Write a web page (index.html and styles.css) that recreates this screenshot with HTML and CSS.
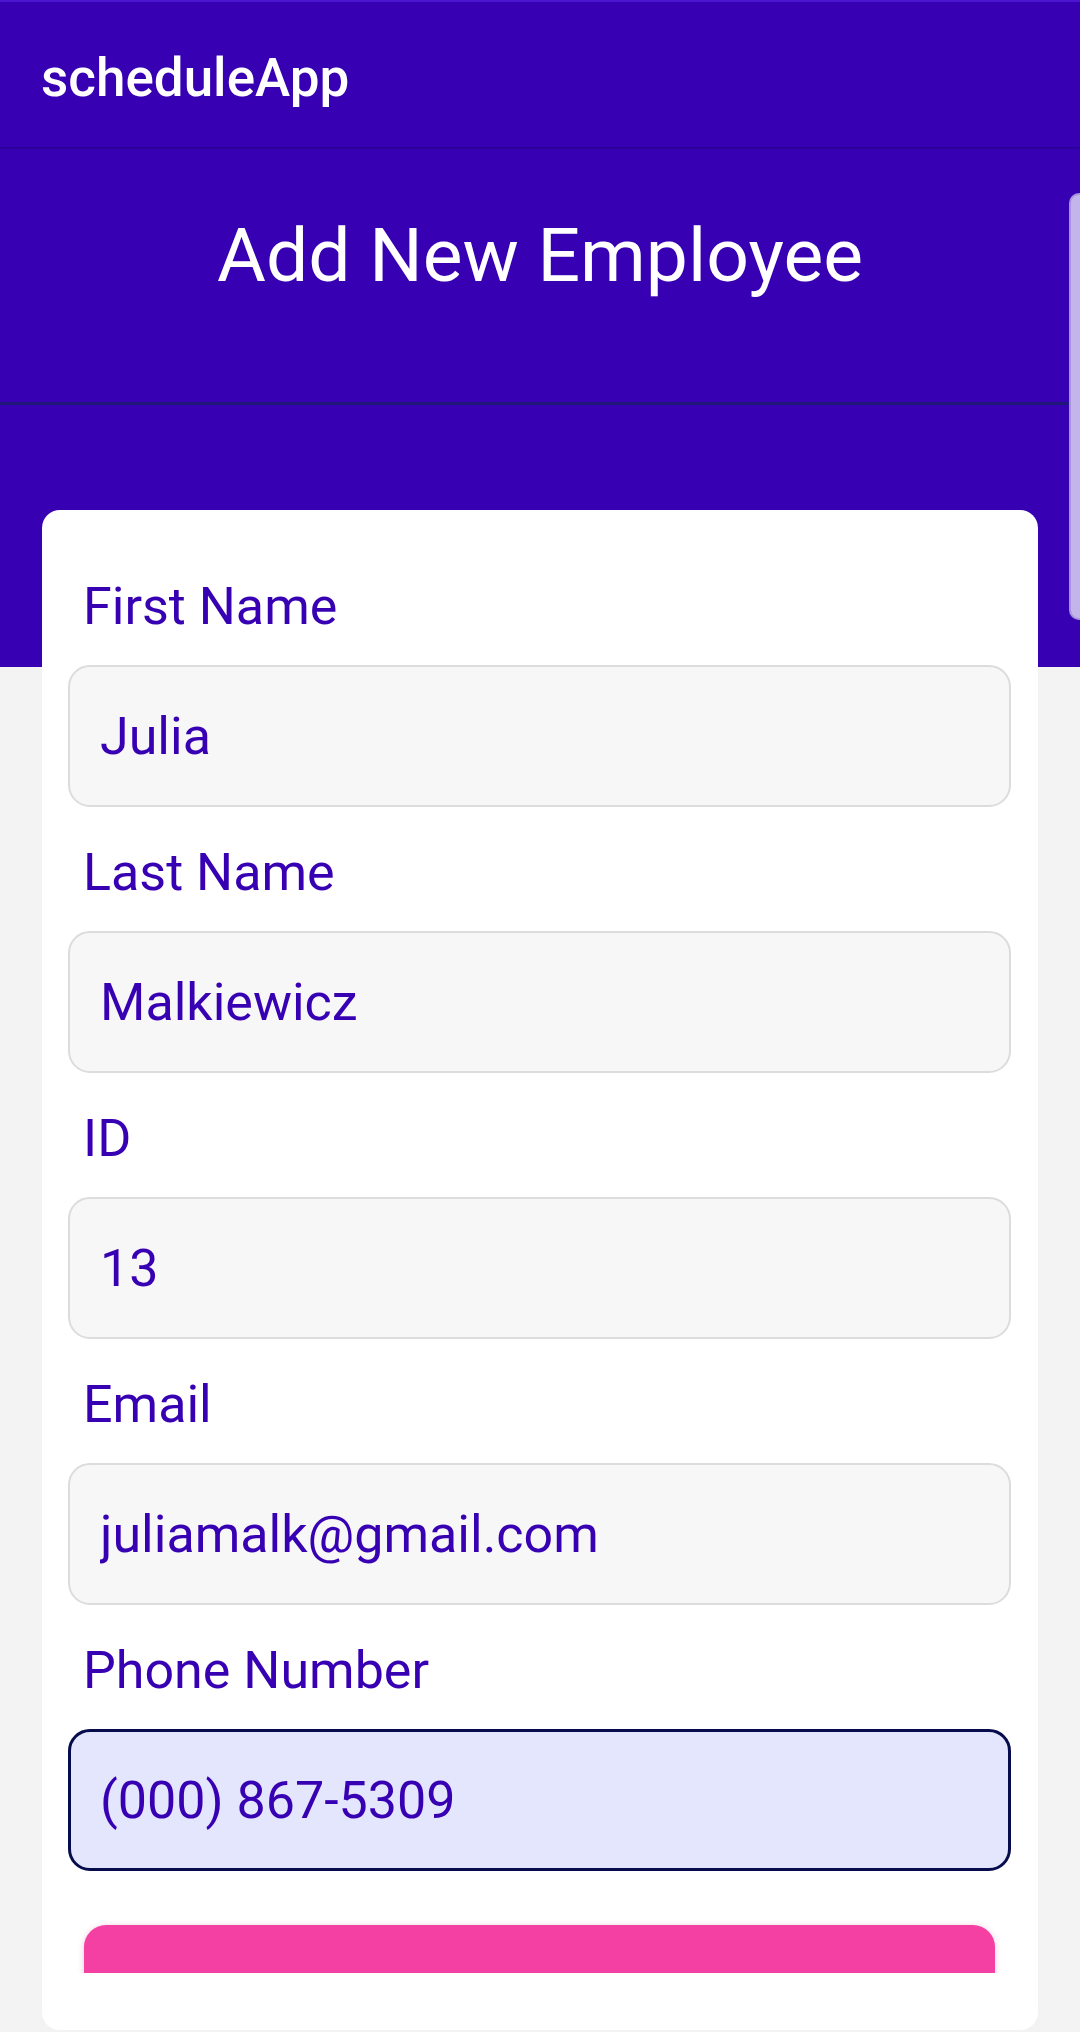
FILE: index.html
```html
<!DOCTYPE html>
<html lang="en">
<head>
<meta charset="utf-8">
<title>scheduleApp</title>
<link rel="stylesheet" href="styles.css">
</head>
<body>
<header class="appbar"><span class="brand">scheduleApp</span></header>
<section class="hero"><h1 class="hero-title">Add New Employee</h1></section>
<main class="main">
  <div class="card">
    <form class="form-scroll">
      <label class="field-label" for="fn">First Name</label>
      <input class="field-input" id="fn" type="text" value="Julia">
      <label class="field-label" for="ln">Last Name</label>
      <input class="field-input" id="ln" type="text" value="Malkiewicz">
      <label class="field-label" for="eid">ID</label>
      <input class="field-input" id="eid" type="text" value="13">
      <label class="field-label" for="em">Email</label>
      <input class="field-input" id="em" type="text" value="juliamalk@gmail.com">
      <label class="field-label" for="ph">Phone Number</label>
      <input class="field-input field-input--focused" id="ph" type="text" value="(000) 867-5309">
      <div class="submit-btn"></div>
    </form>
  </div>
</main>
<div class="edge-handle"></div>
</body>
</html>
```

FILE: styles.css
```css
html, body {
  margin: 0;
  padding: 0;
}
body {
  width: 1080px;
  height: 2032px;
  overflow: hidden;
  font-family: Roboto, "Noto Sans", sans-serif;
  background: #f3f3f3;
  position: relative;
}
.appbar {
  box-sizing: border-box;
  height: 147px;
  background: #3700b3;
  border-top: 2px solid #4a16d2;
  display: flex;
  align-items: center;
  padding: 0 0 0 41px;
  box-shadow: 0 1px 2px rgba(0, 0, 40, 0.35);
  position: relative;
  z-index: 1;
}
.brand {
  color: #ffffff;
  font-size: 53px;
  font-weight: 500;
  line-height: 62px;
  margin-top: 6px;
}
.hero {
  box-sizing: border-box;
  height: 258px;
  background: #3700b3;
  border-bottom: 3px solid #1f1878;
  padding-top: 64px;
}
.hero-title {
  margin: 0;
  text-align: center;
  color: #ffffff;
  font-size: 75px;
  font-weight: 400;
  line-height: 88px;
}
.main {
  box-sizing: border-box;
  height: 1627px;
  padding: 105px 42px 0;
  background: linear-gradient(to bottom, #3700b3 0, #3700b3 262px, #f3f3f3 262px);
}
.card {
  box-sizing: border-box;
  height: 1520px;
  background: #ffffff;
  border-radius: 18px;
  display: flex;
  flex-direction: column;
  padding-bottom: 57px;
}
.form-scroll {
  flex: 1;
  min-height: 0;
  overflow: hidden;
  display: flex;
  flex-direction: column;
  margin: 0;
  padding: 66px 27px 0 26px;
}
.field-label {
  flex: none;
  display: block;
  color: #3700b3;
  font-size: 52px;
  line-height: 61px;
  margin: 0 0 28px 15px;
}
.field-input {
  flex: none;
  box-sizing: border-box;
  height: 142px;
  width: 100%;
  margin: 0 0 35px;
  padding: 0 30px;
  border: 2px solid #dcdcdc;
  border-radius: 22px;
  background: #f7f7f8;
  color: #3700b3;
  font-family: Roboto, "Noto Sans", sans-serif;
  font-size: 52px;
  outline: none;
}
.field-input--focused {
  border: 3px solid #070c4c;
  background: #e4e6fd;
  padding-left: 29px;
  margin-bottom: 54px;
}
.submit-btn {
  flex: none;
  height: 150px;
  margin: 0 16px;
  background: #f540a3;
  border-radius: 22px;
  box-shadow: 0 1px 6px rgba(180, 40, 120, 0.25);
}
.edge-handle {
  position: absolute;
  right: 0;
  top: 193px;
  width: 11px;
  height: 427px;
  box-sizing: border-box;
  background: #c3b4e9;
  border: 2px solid #a894dd;
  border-right: none;
  border-radius: 10px 0 0 10px;
}
```
